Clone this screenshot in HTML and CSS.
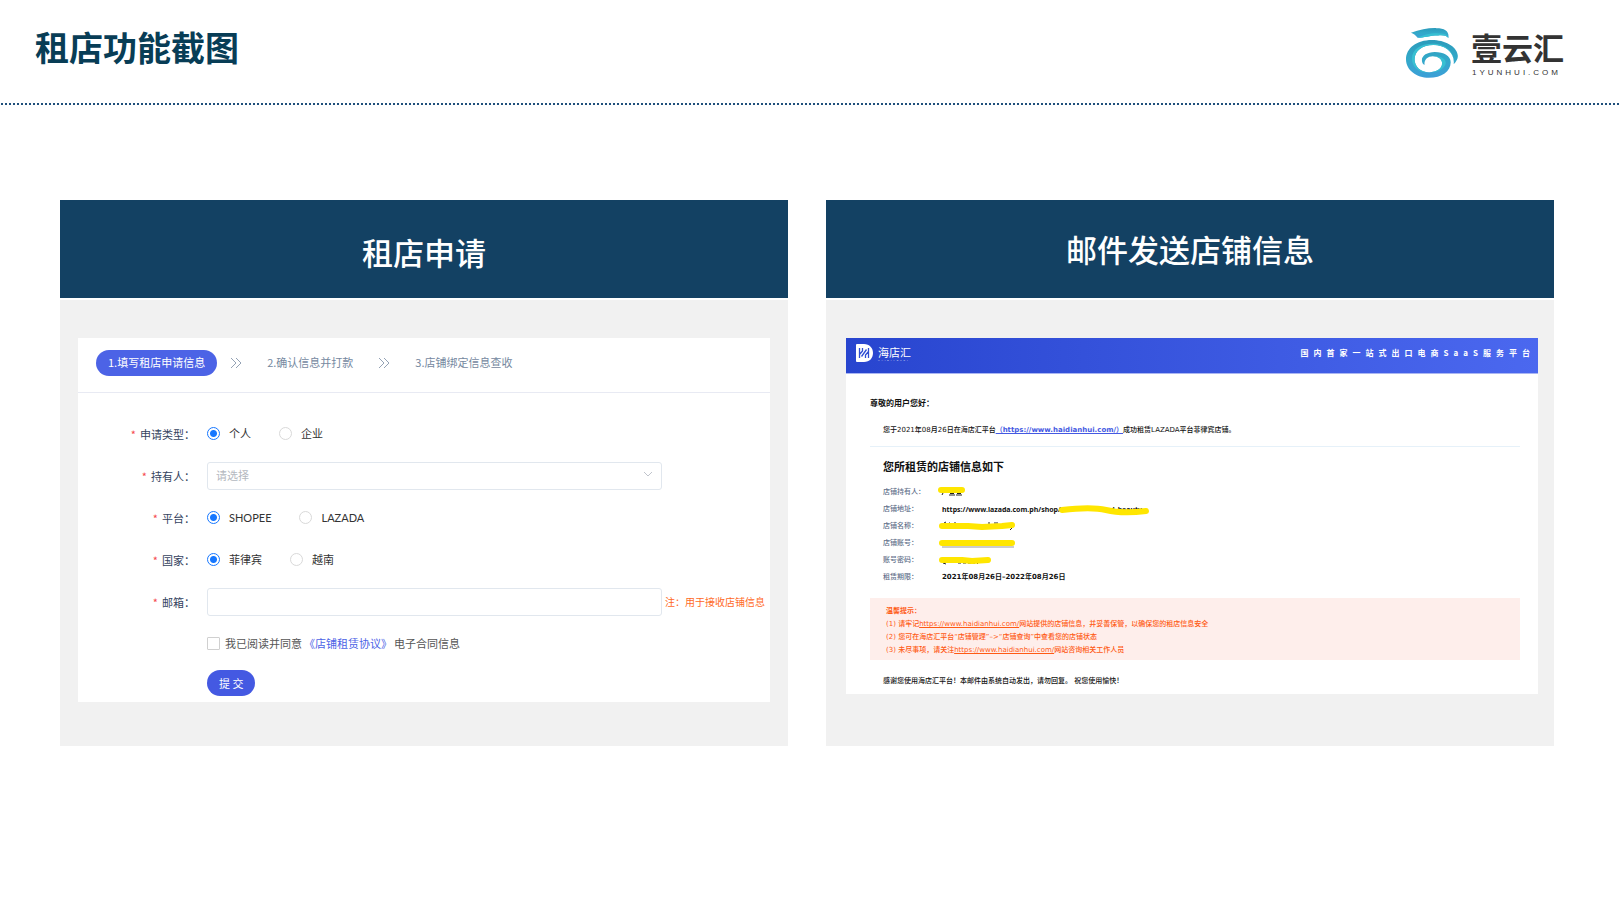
FILE: index.html
```html
<!DOCTYPE html>
<html lang="zh-CN">
<head>
<meta charset="utf-8">
<meta name="viewport" content="width=device-width, initial-scale=1">
<title>租店功能截图</title>
<link rel="stylesheet" href="styles.css">
</head>
<body>
<header class="page-header">
  <h1 class="page-title">租店功能截图</h1>
  <div class="brand">
    <svg class="brand-mark" viewBox="78 54 157 150" aria-hidden="true">
      <defs>
        <linearGradient id="swirl" x1="0" y1="0" x2="0" y2="1">
          <stop offset="0" stop-color="#2b9bbb"/>
          <stop offset="0.5" stop-color="#33a9c9"/>
          <stop offset="1" stop-color="#3c9fd8"/>
        </linearGradient>
      </defs>
      <path fill="url(#swirl)" d="M93 68C120 58 148 53 170 54C196 54 209 63 206 84C200 76 190 75 175 76C150 76 132 83 113 83C107 75 100 70 93 68Z"/>
      <path fill="#38c0d2" d="M113 83C132 72 165 66 190 71C200 73 205 77 206 84C200 76 190 75 175 76C150 76 132 83 113 83Z"/>
      <path fill="url(#swirl)" d="M222 163C232 152 236 143 234 134C230 109 195 90 156 90C110 90 78 115 78 148C78 181 110 204 147 204C186 204 213 185 213 157C213 138 192 126 165 126C142 126 126 137 126 150C126 158 129 163 134 165C132 150 143 139 159 139C176 139 187 148 187 160C187 176 170 187 148 187C121 187 104 170 104 148C104 122 128 105 160 105C197 105 226 127 222 163Z"/>
      <path fill="#38c0d2" d="M96 146C96 118 122 101 158 101C196 101 226 124 222 163C226 127 197 105 160 105C128 105 104 122 104 148C104 170 121 187 148 187C118 189 96 172 96 146Z"/>
      <path fill="#38c0d2" d="M159 139C182 136 200 147 198 160C194 178 172 189 148 187C170 187 187 176 187 160C187 148 176 139 159 139Z"/>
    </svg>
    <div class="brand-text">
      <span class="brand-name">壹云汇</span>
      <span class="brand-domain">1YUNHUI.COM</span>
    </div>
  </div>
</header>

<main class="panels">
  <section class="panel">
    <h2 class="panel-title panel-title-strong">租店申请</h2>
    <div class="panel-body">
      <div class="sheet">
        <ol class="steps">
          <li class="step step-active">1.填写租店申请信息</li>
          <li class="step-arrow" aria-hidden="true"><svg viewBox="0 0 12 12"><path d="M1 1l5 5-5 5M6 1l5 5-5 5"/></svg></li>
          <li class="step">2.确认信息并打款</li>
          <li class="step-arrow" aria-hidden="true"><svg viewBox="0 0 12 12"><path d="M1 1l5 5-5 5M6 1l5 5-5 5"/></svg></li>
          <li class="step">3.店铺绑定信息查收</li>
        </ol>
        <form class="form">
          <div class="row" role="radiogroup" aria-labelledby="type-label">
            <span class="label" id="type-label">申请类型：</span>
            <div class="choices">
              <label class="choice"><input type="radio" name="type" checked>个人</label>
              <label class="choice"><input type="radio" name="type">企业</label>
            </div>
          </div>
          <div class="row">
            <label class="label" for="holder">持有人：</label>
            <div class="select-box">
              <select class="field" id="holder"><option>请选择</option></select>
              <svg class="caret" viewBox="0 0 10 6" aria-hidden="true"><path d="M1 1l4 4 4-4"/></svg>
            </div>
          </div>
          <div class="row" role="radiogroup" aria-labelledby="platform-label">
            <span class="label" id="platform-label">平台：</span>
            <div class="choices">
              <label class="choice"><input type="radio" name="platform" checked>SHOPEE</label>
              <label class="choice"><input type="radio" name="platform">LAZADA</label>
            </div>
          </div>
          <div class="row" role="radiogroup" aria-labelledby="country-label">
            <span class="label" id="country-label">国家：</span>
            <div class="choices">
              <label class="choice"><input type="radio" name="country" checked>菲律宾</label>
              <label class="choice"><input type="radio" name="country">越南</label>
            </div>
          </div>
          <div class="row">
            <label class="label" for="email">邮箱：</label>
            <input class="field" id="email" type="email">
            <span class="note">注：用于接收店铺信息</span>
          </div>
          <div class="row row-short">
            <div class="agree">
              <input type="checkbox" id="agree">
              <label for="agree">我已阅读并同意</label>
              <a href="#agreement">《店铺租赁协议》</a>
              <span>电子合同信息</span>
            </div>
          </div>
          <div class="row row-short">
            <button class="submit" type="button">提 交</button>
          </div>
        </form>
      </div>
    </div>
  </section>

  <section class="panel">
    <h2 class="panel-title">邮件发送店铺信息</h2>
    <div class="panel-body panel-body-mail">
      <article class="sheet">
        <header class="mail-header">
          <div class="mail-brand">
            <svg class="mail-mark" viewBox="0 0 17 18" aria-hidden="true">
              <path fill="#fff" d="M0 1Q0 0 1 0H8C13.500 0 17 4 17 9S13.500 18 8 18H1Q0 18 0 17Z"/>
              <path fill="none" stroke="#2e4dd3" stroke-width="1.300" d="M3.500 4V14M6.500 4V7L3.500 10.500M12.500 4V14M9.500 14V11L12.500 7.500M5.500 12.500L10.500 5.500"/>
            </svg>
            <div class="mail-name">
              <span class="mail-name-cn">海店汇</span>
              <span class="mail-name-en">HAIDIANHUI</span>
            </div>
          </div>
          <span class="slogan">国内首家一站式出口电商SaaS服务平台</span>
        </header>
        <div class="mail-body">
          <p class="greeting">尊敬的用户您好：</p>
          <p class="intro">您于2021年08月26日在海店汇平台<a href="https://www.haidianhui.com/">（https://www.haidianhui.com/）</a>成功租赁LAZADA平台菲律宾店铺。</p>
          <h3 class="shop-title">您所租赁的店铺信息如下</h3>
          <dl class="shop">
            <dt>店铺持有人：</dt>
            <dd><svg class="mask" viewBox="-4 -8 80 17" aria-hidden="true"><path class="ink" d="M1 1L0 3M8 1.500h4M7 3h6M15 1.500h4M14 3h6"/><path class="marker" d="M-1 -2H20"/></svg></dd>
            <dt>店铺地址：</dt>
            <dd>https://www.lazada.com.ph/shop<span class="masked">/<span>d_beauty</span><svg class="mask-over" viewBox="0 -8 92 17" aria-hidden="true"><path class="marker" d="M4 1C20 -1 36 -2 48 1S72 4 88 2"/></svg></span></dd>
            <dt>店铺名称：</dt>
            <dd><svg class="mask" viewBox="-4 -8 80 17" aria-hidden="true"><path class="ink" d="M2 -3l2-1M7 -3h1M12 -3h2M47 -4v3M52 -3h4M68 4l2-2"/><path class="marker" d="M0 0H26L40 1L60 0L70 -1"/></svg></dd>
            <dt>店铺账号：</dt>
            <dd><svg class="mask" viewBox="-4 -8 80 17" aria-hidden="true"><path class="ink ink-line" d="M0 4H72"/><path class="marker" d="M0 0H70"/></svg></dd>
            <dt>账号密码：</dt>
            <dd><svg class="mask" viewBox="-4 -8 80 17" aria-hidden="true"><path class="ink" d="M1 3l3 1M16 3h3M21 3h3M26 3h3M31 3h2M35 4l2-2"/><path class="marker" d="M0 0H20L30 1L46 0"/></svg></dd>
            <dt>租赁期限：</dt>
            <dd class="period">2021年08月26日–2022年08月26日</dd>
          </dl>
          <div class="tips">
            <p class="tips-title">温馨提示：</p>
            <p>(1) 请牢记<a href="https://www.haidianhui.com/">https://www.haidianhui.com/</a>网站提供的店铺信息，并妥善保管，以确保您的租店信息安全</p>
            <p>(2) 您可在海店汇平台“店铺管理”–&gt;“店铺查询”中查看您的店铺状态</p>
            <p>(3) 未尽事项，请关注<a href="https://www.haidianhui.com/">https://www.haidianhui.com/</a>网站咨询相关工作人员</p>
          </div>
          <p class="closing">感谢您使用海店汇平台！本邮件由系统自动发出，请勿回复。 祝您使用愉快！</p>
        </div>
      </article>
    </div>
  </section>
</main>
</body>
</html>
```
FILE: styles.css
```css
* {
  box-sizing: border-box;
}

body {
  margin: 0;
  background: #fff;
  color: #333;
  font-family: "Noto Sans CJK SC", sans-serif;
}

h1, h2, h3, p, ol, dl, dd {
  margin: 0;
  padding: 0;
}

/* Page header */
.page-header {
  display: flex;
  justify-content: space-between;
  align-items: flex-start;
  padding: 22px 56px 27px 35px;
  background: repeating-linear-gradient(90deg, transparent 0 1px, #1f4f7b 1px 3px, transparent 3px 4px) bottom / 100% 2px no-repeat;
}

.page-title {
  color: #083d56;
  font-size: 34px;
  line-height: 50px;
  font-weight: 700;
}

.brand {
  display: flex;
  gap: 13px;
  padding-top: 6px;
}

.brand-mark {
  width: 52px;
  height: 50px;
}

.brand-text {
  display: flex;
  flex-direction: column;
  padding-top: 4px;
  color: #333;
  font-family: "Liberation Sans", "Noto Sans CJK SC", sans-serif;
}

.brand-name {
  font-size: 31px;
  line-height: 36px;
  font-weight: 700;
}

.brand-domain {
  padding-left: 1px;
  font-size: 8px;
  line-height: 10px;
  letter-spacing: 3px;
}

/* Panels */
.panels {
  display: grid;
  grid-template-columns: 1fr 1fr;
  gap: 38px;
  padding: 95px 66px 40px 60px;
}

.panel {
  display: flex;
  flex-direction: column;
  gap: 2px;
}

.panel-title {
  padding: 29px 0;
  background: #134163;
  color: #fff;
  font-size: 31px;
  line-height: 40px;
  font-weight: 500;
  text-align: center;
}

.panel-title-strong {
  padding: 32px 0 26px;
}

.panel-body {
  flex: 1;
  padding: 38px 18px 44px;
  background: #f1f1f1;
}

.panel-body-mail {
  padding: 38px 16px 52px 20px;
}

.sheet {
  background: #fff;
}

/* Application form */
.steps {
  display: flex;
  align-items: center;
  padding: 12px 18px 16px;
  border-bottom: 1px solid #e8eaf3;
  list-style: none;
  font-size: 11px;
  line-height: 24px;
}

.step {
  padding: 0 12px 2px;
  color: #7588a0;
}

.step-active {
  border-radius: 13px;
  background: #4c63e6;
  color: #fff;
}

.step-arrow {
  display: flex;
  margin: 0 13px;
}

.step-arrow svg {
  width: 12px;
  height: 12px;
  fill: none;
  stroke: #94a2b5;
}

.form {
  display: flex;
  flex-direction: column;
  gap: 14px;
  padding: 27px 2px 6px 0;
  font-size: 11px;
}

.row {
  display: grid;
  grid-template-columns: 117px 1fr 103px;
  align-items: center;
  min-height: 28px;
}

.row-short {
  min-height: 26px;
}

.label {
  color: #34435e;
  text-align: right;
}

.label::before {
  content: "*";
  margin-right: 4px;
  color: #f5484d;
}

.choices {
  display: flex;
  gap: 28px;
  margin-left: 12px;
  padding-bottom: 2px;
}

.choice {
  display: flex;
  align-items: center;
  gap: 9px;
  font-family: Lato, "Noto Sans CJK SC", sans-serif;
}

.choice input {
  appearance: none;
  width: 13px;
  height: 13px;
  margin: 0;
  border: 1px solid #d9d9d9;
  border-radius: 50%;
  background: #fff;
}

.choice input:checked {
  border-color: #1677ff;
  background: radial-gradient(circle, #1677ff 3px, #fff 4px);
}

.field {
  width: 100%;
  height: 28px;
  padding: 0 8px 2px;
  border: 1px solid #e1e7ee;
  border-radius: 3px;
  background: #fff;
  color: #b4b8c0;
  font: inherit;
}

input.field {
  width: auto;
  margin: 0 3px 0 12px;
}

.select-box {
  position: relative;
  margin: 0 3px 0 12px;
}

select.field {
  display: block;
  appearance: none;
}

.caret {
  position: absolute;
  top: 9px;
  right: 9px;
  width: 10px;
  height: 6px;
  fill: none;
  stroke: #c0c4cc;
}

.note {
  padding-bottom: 2px;
  color: #ff6a1f;
  font-size: 10px;
  white-space: nowrap;
}

.agree {
  display: flex;
  grid-column: 2;
  align-items: center;
  gap: 2px;
  margin-left: 12px;
  color: #555;
}

.agree input {
  appearance: none;
  width: 13px;
  height: 13px;
  margin: 0 3px 0 0;
  border: 1px solid #d0d0d0;
  border-radius: 1px;
}

.agree a {
  color: #4c63e6;
  text-decoration: none;
}

.submit {
  grid-column: 2;
  justify-self: start;
  height: 26px;
  margin: 0 0 0 12px;
  padding: 0 12px;
  border: 0;
  border-radius: 13px;
  background: #4459e2;
  color: #fff;
  font: inherit;
}

/* Mail */
.mail-header {
  display: flex;
  justify-content: space-between;
  align-items: center;
  height: 36px;
  padding: 0 3px 5px 10px;
  border-bottom: 1px solid #aab6f3;
  background: linear-gradient(90deg, #2845cf, #4b68ef);
  color: #fff;
}

.mail-brand {
  display: flex;
  align-items: center;
  gap: 5px;
}

.mail-mark {
  width: 17px;
  height: 18px;
}

.mail-name {
  display: flex;
  flex-direction: column;
}

.mail-name-cn {
  font-size: 11px;
  line-height: 14px;
}

.mail-name-en {
  font-family: "Liberation Sans", sans-serif;
  font-size: 2px;
  line-height: 2px;
  letter-spacing: 2px;
}

.slogan {
  font-size: 8px;
  line-height: 12px;
  font-weight: 700;
  letter-spacing: 5px;
}

.mail-body {
  padding: 23px 18px 6px 24px;
  color: #111;
  font-family: "DejaVu Sans", "Noto Sans CJK SC", sans-serif;
  font-size: 7px;
  line-height: 13px;
  font-weight: 500;
}

.greeting {
  font-size: 8px;
  font-weight: 700;
}

.intro {
  padding: 14px 0 9px 13px;
  border-bottom: 1px solid #e6f1f9;
}

.intro a {
  color: #4459e2;
  font-weight: 700;
}

.shop-title {
  padding: 13px 0 8px 13px;
  font-size: 11px;
  line-height: 16px;
  font-weight: 700;
}

.shop {
  display: grid;
  grid-template-columns: 59px 1fr;
  padding-left: 13px;
  line-height: 17px;
}

.shop dt {
  color: #62708a;
}

.shop dd {
  height: 17px;
  font-family: "Noto Sans", "Noto Sans CJK SC", sans-serif;
  font-weight: 700;
}

.shop .period {
  font-family: "DejaVu Sans", "Noto Sans CJK SC", sans-serif;
}

.mask {
  display: block;
  width: 80px;
  height: 17px;
  margin-left: -4px;
}

.masked {
  display: inline-flex;
  position: relative;
  justify-content: space-between;
  width: 84px;
}

.mask-over {
  position: absolute;
  top: 0;
  left: 0;
  width: 92px;
  height: 17px;
}

.marker {
  fill: none;
  stroke: #ffe600;
  stroke-width: 6;
  stroke-linecap: round;
  stroke-linejoin: round;
}

.ink {
  fill: none;
  stroke: #222;
}

.ink-line {
  stroke: #999;
}

.tips {
  margin-top: 12px;
  padding: 7px 16px 3px;
  background: #feeeeb;
  color: #ff5a14;
}

.tips a {
  color: inherit;
}

.tips-title {
  font-weight: 700;
}

.closing {
  padding: 15px 0 0 13px;
}
```
